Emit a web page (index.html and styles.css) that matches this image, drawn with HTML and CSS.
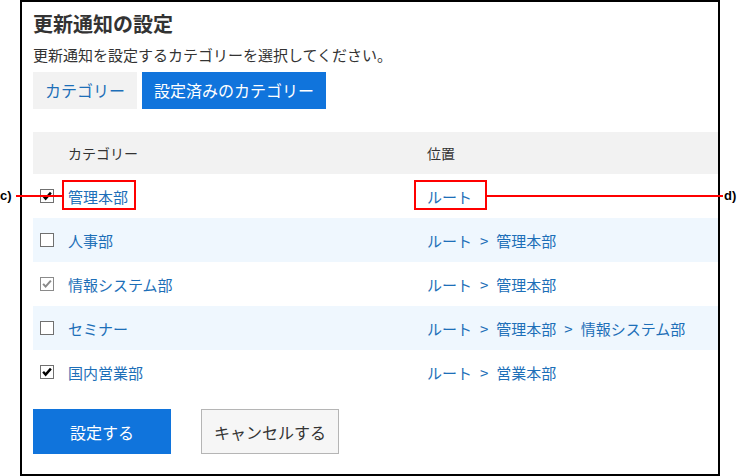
FILE: index.html
```html
<!DOCTYPE html>
<html>
<head>
  <meta charset="utf-8">
  <title>更新通知の設定</title>
  <link rel="stylesheet" href="styles.css">
</head>
<body>
  <div class="frame">
    <h1 class="title">更新通知の設定</h1>
    <p class="lead">更新通知を設定するカテゴリーを選択してください。</p>

    <div class="tabs">
      <a class="tab" href="#">カテゴリー</a>
      <a class="tab tab-active" href="#">設定済みのカテゴリー</a>
    </div>

    <div class="list">
      <div class="row row-head">
        <div class="cell-check"></div>
        <div>カテゴリー</div>
        <div>位置</div>
      </div>
      <div class="row">
        <div class="cell-check"><span class="box checked"><svg viewBox="0 0 13 13"><path d="M2.3 6.3 L5 9.3 L10.7 2.8"/></svg></span></div>
        <div><a href="#">管理本部</a></div>
        <div><a href="#">ルート</a></div>
      </div>
      <div class="row row-alt">
        <div class="cell-check"><span class="box"></span></div>
        <div><a href="#">人事部</a></div>
        <div><a href="#">ルート<span class="sep">&gt;</span>管理本部</a></div>
      </div>
      <div class="row">
        <div class="cell-check"><span class="box checked disabled"><svg viewBox="0 0 13 13"><path d="M2.3 6.3 L5 9.3 L10.7 2.8"/></svg></span></div>
        <div><a href="#">情報システム部</a></div>
        <div><a href="#">ルート<span class="sep">&gt;</span>管理本部</a></div>
      </div>
      <div class="row row-alt">
        <div class="cell-check"><span class="box"></span></div>
        <div><a href="#">セミナー</a></div>
        <div><a href="#">ルート<span class="sep">&gt;</span>管理本部<span class="sep">&gt;</span>情報システム部</a></div>
      </div>
      <div class="row">
        <div class="cell-check"><span class="box checked"><svg viewBox="0 0 13 13"><path d="M2.3 6.3 L5 9.3 L10.7 2.8"/></svg></span></div>
        <div><a href="#">国内営業部</a></div>
        <div><a href="#">ルート<span class="sep">&gt;</span>営業本部</a></div>
      </div>
    </div>

    <div class="buttons">
      <button class="btn btn-primary">設定する</button>
      <button class="btn">キャンセルする</button>
    </div>
  </div>

  <!-- callouts -->
  <span class="callout-label label-c">c)</span>
  <span class="callout-line line-c"></span>
  <span class="callout-box box-c"></span>
  <span class="callout-box box-d"></span>
  <span class="callout-line line-d"></span>
  <span class="callout-label label-d">d)</span>
</body>
</html>
```

FILE: styles.css
```css
body {
  margin: 0;
  font-family: "Noto Sans CJK JP", "Noto Sans", sans-serif;
  color: #333;
  background-color: #fff;
}

.frame {
  box-sizing: border-box;
  width: 700px;
  height: 476px;
  margin-left: 20px;
  border: 2px solid #000;
  padding: 7px 0 0 11px;
}

.title {
  margin: 0;
  font-size: 20px;
  line-height: 30px;
  font-weight: bold;
}

.lead {
  margin: 5px 0 0;
  font-size: 15px;
  line-height: 22px;
}

.tabs {
  display: flex;
  gap: 5px;
  margin-top: 6px;
}

.tab {
  display: block;
  height: 37px;
  line-height: 37px;
  padding: 0 12px;
  font-size: 16px;
  background-color: #f2f2f2;
  color: #1d6fb8;
  text-decoration: none;
}

.tab-active {
  background-color: #1074dc;
  color: #fff;
}

.list {
  margin-top: 23px;
}

.row {
  display: grid;
  grid-template-columns: 35px 359px 1fr;
  align-items: center;
  height: 44px;
  font-size: 15px;
}

.row a {
  color: #1d6fb8;
  text-decoration: none;
}

.row-head {
  height: 42px;
  background-color: #f2f2f2;
  font-size: 14px;
  color: #333;
}

.row-alt {
  background-color: #eff7fe;
}

.cell-check {
  display: flex;
  align-items: center;
  padding-left: 7px;
}

.box {
  box-sizing: border-box;
  display: block;
  width: 14px;
  height: 14px;
  border: 1px solid #707070;
  background-color: #fff;
}

.box svg {
  display: block;
  width: 12px;
  height: 12px;
}

.box path {
  fill: none;
  stroke: #000;
  stroke-width: 2.6;
}

.box.disabled {
  border-color: #8a8a8a;
}

.box.disabled path {
  stroke: #8a8a8a;
  stroke-width: 2.2;
}

.sep {
  margin: 0 8px;
}

.buttons {
  display: flex;
  gap: 30px;
  margin-top: 15px;
}

.btn {
  box-sizing: border-box;
  width: 138px;
  height: 45px;
  font-family: inherit;
  font-size: 16px;
  color: #333;
  background-color: #f6f6f6;
  border: 1px solid #b5b5b5;
  padding: 0;
  cursor: pointer;
}

.btn-primary {
  background-color: #1074dc;
  border-color: #1074dc;
  color: #fff;
}

/* callouts */
.callout-label {
  position: absolute;
  font-family: "Liberation Sans", Arial, sans-serif;
  font-weight: bold;
  font-size: 13px;
  line-height: 16px;
  color: #000;
}

.label-c {
  left: 0;
  top: 188px;
}

.label-d {
  left: 724px;
  top: 188px;
}

.callout-line {
  position: absolute;
  height: 2px;
  top: 195px;
  background-color: #f00;
}

.line-c {
  left: 16px;
  width: 46px;
}

.line-d {
  left: 487px;
  width: 236px;
}

.callout-box {
  position: absolute;
  box-sizing: border-box;
  top: 180px;
  height: 30px;
  border: 2px solid #f00;
}

.box-c {
  left: 62px;
  width: 74px;
}

.box-d {
  left: 414px;
  width: 73px;
}
```
